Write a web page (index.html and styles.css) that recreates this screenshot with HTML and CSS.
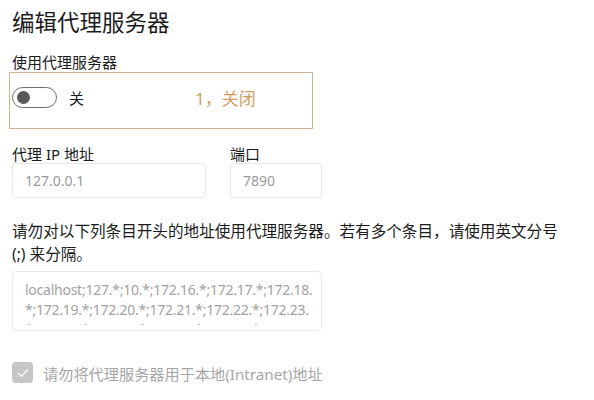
FILE: index.html
```html
<!DOCTYPE html>
<html lang="zh-CN">
<head>
<meta charset="utf-8">
<title>编辑代理服务器</title>
<link rel="stylesheet" href="styles.css">
</head>
<body>
<div class="page">
  <h1 class="title">编辑代理服务器</h1>
  <div class="label first">使用代理服务器</div>
  <div class="note-box">
    <div class="toggle-row">
      <span class="toggle"><span class="knob"></span></span>
      <span class="toggle-text">关</span>
      <span class="note">1，关闭</span>
    </div>
  </div>
  <div class="fields">
    <div class="field">
      <div class="label">代理 IP 地址</div>
      <div class="input ip">127.0.0.1</div>
    </div>
    <div class="field">
      <div class="label">端口</div>
      <div class="input port">7890</div>
    </div>
  </div>
  <p class="desc">请勿对以下列条目开头的地址使用代理服务器。若有多个条目，请使用英文分号 (;) 来分隔。</p>
  <div class="textarea">
    <div class="textarea-content">
      <div class="line">localhost;127.*;10.*;172.16.*;172.17.*;172.18.</div>
      <div class="line">*;172.19.*;172.20.*;172.21.*;172.22.*;172.23.</div>
      <div class="line">*;172.24.*;172.25.*;172.26.*;172.27.*;172.28.</div>
    </div>
  </div>
  <div class="check-row">
    <span class="checkbox">
      <svg width="14" height="14" viewBox="0 0 14 14"><path d="M2.5 7.3 L5.6 10.2 L11.5 3.8" fill="none" stroke="#fff" stroke-width="1.4" stroke-linecap="round" stroke-linejoin="round"/></svg>
    </span>
    <span class="check-text">请勿将代理服务器用于本地(Intranet)地址</span>
  </div>
</div>
</body>
</html>
```
FILE: styles.css
```css
html, body {
  margin: 0;
  padding: 0;
  background: #ffffff;
}
body {
  font-family: "Segoe UI", "Noto Sans", "Noto Sans CJK SC", sans-serif;
  color: #1b1b1b;
  width: 594px;
  height: 400px;
  overflow: hidden;
}
.page {
  padding-left: 12px;
}
.title {
  margin: 6px 0 0;
  font-size: 22.5px;
  line-height: 34px;
  font-weight: 400;
}
.label {
  font-size: 15px;
  line-height: 18px;
}
.label.first {
  margin-top: 13px;
  line-height: 19px;
}
.note-box {
  margin-left: -3px;
  width: 300px;
  border: 1px solid #cdb38e;
  padding: 14px 0 20px 2px;
}
.toggle-row {
  display: flex;
  align-items: center;
  height: 21px;
}
.toggle {
  box-sizing: border-box;
  width: 45px;
  height: 21px;
  border: 1px solid #6e6e6e;
  border-radius: 11px;
  display: flex;
  align-items: center;
  padding-left: 4px;
}
.knob {
  width: 13px;
  height: 13px;
  border-radius: 50%;
  background: #5a5a5a;
}
.toggle-text {
  margin-left: 12px;
  font-size: 15px;
}
.note {
  margin-left: 111px;
  font-size: 17px;
  color: #d29d5e;
}
.fields {
  display: flex;
  gap: 24px;
  margin-top: 16px;
}
.input {
  box-sizing: border-box;
  height: 35px;
  border: 1px solid #e8e8e8;
  border-radius: 4px;
  padding-left: 12px;
  display: flex;
  align-items: center;
  font-size: 14px;
  color: #9a9a9a;
}
.input.ip {
  width: 194px;
}
.input.port {
  width: 92px;
}
.desc {
  margin: 22px 0 0;
  width: 552px;
  font-size: 15.6px;
  line-height: 23px;
}
.textarea {
  box-sizing: border-box;
  margin-top: 5px;
  width: 310px;
  height: 60px;
  border: 1px solid #ebebeb;
  border-radius: 4px;
  padding: 8px 0 0 12px;
}
.textarea-content {
  height: 45px;
  overflow: hidden;
  font-size: 14px;
  line-height: 20px;
  letter-spacing: -0.25px;
  color: #a2a2a2;
}
.line {
  white-space: nowrap;
}
.check-row {
  margin-top: 31px;
  display: flex;
  align-items: center;
  height: 21px;
}
.checkbox {
  width: 21px;
  height: 21px;
  border-radius: 4px;
  background: #c6c6c6;
  display: flex;
  align-items: center;
  justify-content: center;
}
.check-text {
  margin-left: 10px;
  font-size: 15.2px;
  color: #a6a6a6;
}
```
